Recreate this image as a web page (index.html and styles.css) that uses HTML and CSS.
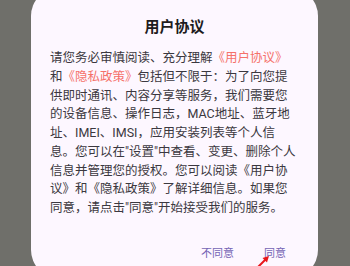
FILE: index.html
```html
<!DOCTYPE html>
<html lang="zh-CN">
<head>
  <meta charset="UTF-8" />
  <meta name="viewport" content="width=device-width, initial-scale=1.0"/>
  <title>用户协议</title>
  <link rel="stylesheet" href="styles.css">
</head>
<body>

  <!-- Agreement Dialog -->
  <div class="dialog">
    <div class="dialog-title">用户协议</div>

    <div class="dialog-body">
      请您务必审慎阅读、充分理解<span class="link">《用户协议》</span>和<span class="link">《隐私政策》</span>包括但不限于：为了向您提供即时通讯、内容分享等服务，我们需要您的设备信息、操作日志，MAC地址、蓝牙地址、IMEI、IMSI，应用安装列表等个人信息。您可以在"设置"中查看、变更、删除个人信息并管理您的授权。您可以阅读《用户协议》和《隐私政策》了解详细信息。如果您同意，请点击"同意"开始接受我们的服务。
    </div>

    <div class="dialog-actions">
      <button class="text-button">不同意</button>
      <button class="text-button">同意</button>
    </div>

    <!-- annotation arrow -->
    <svg class="pointer" width="14" height="14" viewBox="0 0 14 14">
      <line x1="1" y1="13" x2="9" y2="5" stroke="#e8161b" stroke-width="2"/>
      <polygon points="12,2 5.5,4 10,8.5" fill="#e8161b"/>
    </svg>
  </div>

</body>
</html>
```

FILE: styles.css
```css
body {
  margin: 0;
  background-color: #6f6f6a;
  font-family: Roboto, "Noto Sans CJK SC", sans-serif;
  height: 266px;
  overflow: hidden;
}

.dialog {
  position: relative;
  width: 287px;
  height: 290px;
  margin: -12px 0 0 31px;
  padding: 28px 19px 0;
  box-sizing: border-box;
  background-color: #fdf7ff;
  border-radius: 28px;
}

.dialog-title {
  font-family: "Noto Sans CJK SC", sans-serif;
  font-size: 15px;
  line-height: 20px;
  font-weight: bold;
  color: #1d1b20;
  text-align: center;
}

.dialog-body {
  margin-top: 13px;
  font-size: 12.5px;
  line-height: 18.75px;
  color: #3b3840;
  word-break: break-all;
}

.link {
  color: #f5716a;
}

.dialog-actions {
  display: flex;
  justify-content: flex-end;
  gap: 30px;
  margin: 26px 13px 0 0;
}

.text-button {
  background: none;
  border: none;
  padding: 0;
  font-family: "Noto Sans CJK SC", sans-serif;
  font-size: 11px;
  line-height: 16px;
  color: #7565b5;
  cursor: pointer;
}

.pointer {
  position: absolute;
  left: 226px;
  top: 266px;
}
```
